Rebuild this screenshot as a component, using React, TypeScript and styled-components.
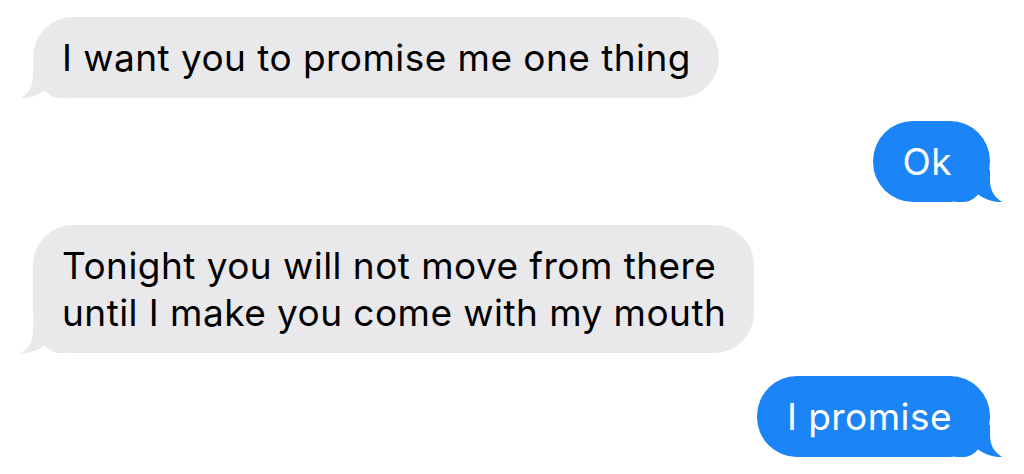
import React from "react";
import styled, { createGlobalStyle } from "styled-components";

const GlobalStyle = createGlobalStyle`
  html, body {
    margin: 0;
    padding: 0;
    background: #ffffff;
  }
  body {
    font-family: Inter, "Liberation Sans", Arial, sans-serif;
    -webkit-font-smoothing: antialiased;
  }
`;

const TThread = styled("div")`
  display: flex;
  flex-direction: column;
  gap: 23px;
  padding: 17px 34px 0 33px;
  width: 1024px;
  height: 474px;
  box-sizing: border-box;
  overflow: hidden;
`;

const TRow = styled("div")<{ $mine?: boolean }>`
  display: flex;
  justify-content: ${(p) => (p.$mine ? "flex-end" : "flex-start")};
`;

const TBubble = styled("div")<{ $mine?: boolean }>`
  position: relative;
  background: ${(p) => (p.$mine ? "#1b84f6" : "#e9e9ec")};
  color: ${(p) => (p.$mine ? "#ffffff" : "#000000")};
  font-size: 37px;
  line-height: 47px;
  letter-spacing: 0.45px;
  padding: ${(p) => (p.$mine ? "17px 38px 17px 30px" : "17px 28px 17px 29px")};
  border-radius: 40px;
  white-space: pre-line;
`;

const TText = styled("span")`
  position: relative;
  z-index: 1;
`;

const TTail = styled("svg")<{ $mine?: boolean }>`
  position: absolute;
  bottom: 0;
  width: 48px;
  height: 32px;
  z-index: 0;
  ${(p) =>
    p.$mine
      ? "right: -13px; transform: scaleX(-1);"
      : "left: -13px;"}
`;

const Tail = ({ mine }: { mine?: boolean }) => (
  <TTail $mine={mine} viewBox="0 0 48 32">
    <path
      d="M13 0 L13 10 C13 20 9 27 1 32 C9 32.5 17 30 25 24.5 C28 28 32 31 38 32 L48 32 L48 0 Z"
      fill={mine ? "#1b84f6" : "#e9e9ec"}
    />
  </TTail>
);

const messages = [
  { mine: false, text: "I want you to promise me one thing" },
  { mine: true, text: "Ok" },
  {
    mine: false,
    text: "Tonight you will not move from there\nuntil I make you come with my mouth",
  },
  { mine: true, text: "I promise" },
];

export default function App() {
  return (
    <>
      <GlobalStyle />
      <TThread>
        {messages.map((m, i) => (
          <TRow key={i} $mine={m.mine}>
            <TBubble $mine={m.mine}>
              <Tail mine={m.mine} />
              <TText>{m.text}</TText>
            </TBubble>
          </TRow>
        ))}
      </TThread>
    </>
  );
}
